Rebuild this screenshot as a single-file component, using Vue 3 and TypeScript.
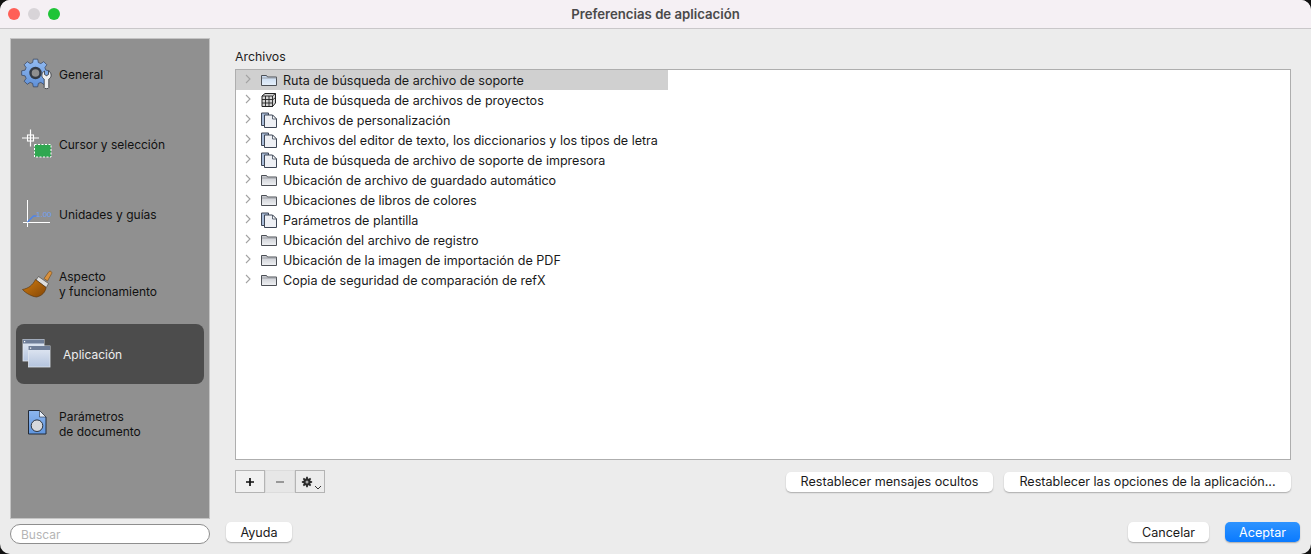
<script setup lang="ts">
type Kind = 'folderBlue' | 'grid' | 'docs' | 'folder'
interface Row { label: string; kind: Kind }
const rows: Row[] = [
  { label: 'Ruta de búsqueda de archivo de soporte', kind: 'folderBlue' },
  { label: 'Ruta de búsqueda de archivos de proyectos', kind: 'grid' },
  { label: 'Archivos de personalización', kind: 'docs' },
  { label: 'Archivos del editor de texto, los diccionarios y los tipos de letra', kind: 'docs' },
  { label: 'Ruta de búsqueda de archivo de soporte de impresora', kind: 'docs' },
  { label: 'Ubicación de archivo de guardado automático', kind: 'folder' },
  { label: 'Ubicaciones de libros de colores', kind: 'folder' },
  { label: 'Parámetros de plantilla', kind: 'docs' },
  { label: 'Ubicación del archivo de registro', kind: 'folder' },
  { label: 'Ubicación de la imagen de importación de PDF', kind: 'folder' },
  { label: 'Copia de seguridad de comparación de refX', kind: 'folder' },
]

function cog(cx: number, cy: number, outer: number, inner: number, teeth: number): string {
  const pts: string[] = []
  const step = (Math.PI * 2) / teeth
  for (let i = 0; i < teeth; i++) {
    const a = i * step - Math.PI / 2
    const offsets: [number, number][] = [
      [-0.34, inner],
      [-0.2, outer],
      [0.2, outer],
      [0.34, inner],
    ]
    for (const [o, r] of offsets) {
      const t = a + o * step
      pts.push(`${(cx + r * Math.cos(t)).toFixed(2)} ${(cy + r * Math.sin(t)).toFixed(2)}`)
    }
  }
  return 'M' + pts.join('L') + 'Z'
}
const bigCog = cog(14.5, 15, 14, 10.8, 8)
const smallCog = cog(8.5, 7.5, 5.2, 3.7, 8)
</script>

<template>
  <div class="window">
    <header class="titlebar">
      <div class="lights">
        <span class="light red"></span>
        <span class="light grey"></span>
        <span class="light green"></span>
      </div>
      <div class="title">Preferencias de aplicación</div>
    </header>

    <div class="body">
      <aside class="left">
        <nav class="side">
          <div class="item">
            <svg class="ico" width="32" height="32" viewBox="0 0 32 32">
              <defs>
                <linearGradient id="cogG" x1="0" y1="0" x2="0" y2="1">
                  <stop offset="0" stop-color="#94bcf2" />
                  <stop offset="1" stop-color="#5f90d8" />
                </linearGradient>
                <linearGradient id="brushG" x1="0" y1="0" x2="1" y2="1">
                  <stop offset="0" stop-color="#d07c10" />
                  <stop offset="1" stop-color="#844606" />
                </linearGradient>
                <linearGradient id="winG" x1="0" y1="0" x2="0" y2="1">
                  <stop offset="0" stop-color="#e4eaf4" />
                  <stop offset="1" stop-color="#b4c4de" />
                </linearGradient>
                <linearGradient id="docG" x1="0" y1="0" x2="0" y2="1">
                  <stop offset="0" stop-color="#8db6ee" />
                  <stop offset="1" stop-color="#5f95de" />
                </linearGradient>
                <linearGradient id="fldG" x1="0" y1="0" x2="0" y2="1">
                  <stop offset="0" stop-color="#c4c7ce" />
                  <stop offset="1" stop-color="#f0f1f3" />
                </linearGradient>
                <linearGradient id="fldB" x1="0" y1="0" x2="0" y2="1">
                  <stop offset="0" stop-color="#c5d8ef" />
                  <stop offset="1" stop-color="#e6f0fa" />
                </linearGradient>
              </defs>
              <path :d="bigCog" fill="url(#cogG)" stroke="#33415a" stroke-width=".7" />
              <circle cx="14.500" cy="15" r="5" fill="#8f8f8f" stroke="#343b46" stroke-width="2.400" />
              <path d="M23.500 13v3.500l2 1.200 2-1.200V13c1.500.8 2.600 2.200 2.600 4.200 0 1.800-1 3.200-2.300 3.900v8.500c0 1.400-4.600 1.400-4.600 0v-8.500c-1.300-.7-2.300-2.100-2.300-3.900 0-2 1.100-3.400 2.600-4.200z" fill="#eceef0" stroke="#30343a" stroke-width=".8" />
            </svg>
            <span class="lbl">General</span>
          </div>
          <div class="item">
            <svg class="ico" width="32" height="32" viewBox="0 0 32 32">
              <path d="M1 10h17M9.500 1.500v17" stroke="#fff" stroke-width="1.200" />
              <rect x="6.500" y="7" width="6" height="6" fill="none" stroke="#fff" stroke-width="1.100" />
              <rect x="13.500" y="16.500" width="16.500" height="12.500" fill="#2fa750" stroke="#fff" stroke-width="1" stroke-dasharray="2 1.500" />
            </svg>
            <span class="lbl">Cursor y selección</span>
          </div>
          <div class="item">
            <svg class="ico" width="32" height="32" viewBox="0 0 32 32">
              <path d="M6.500 2v27M2 24.500h27" stroke="#fff" stroke-width="1" />
              <path d="M6.500 24l6-6h3" stroke="#4d84ea" stroke-width="1.400" fill="none" />
              <text x="15" y="18.700" class="mini">1.00</text>
            </svg>
            <span class="lbl">Unidades y guías</span>
          </div>
          <div class="item">
            <svg class="ico" width="32" height="32" viewBox="0 0 32 32">
              <path d="M23 10.500l5-7c1-1.300 3.500.4 2.700 2L26.500 13z" fill="#d8913f" stroke="#6b4415" stroke-width=".6" />
              <path d="M17.500 8.500l10 7-2.200 4-10.300-7.500z" fill="#dedede" stroke="#3e3a36" stroke-width=".6" />
              <path d="M14.500 11.500l10.500 8c-.5 4.500-4 8.500-9.500 9.500-4.500-.5-10.500-3.500-14-7.500 5.500-1 10-4 13-10z" fill="url(#brushG)" stroke="#54300a" stroke-width=".6" />
            </svg>
            <span class="lbl">Aspecto<br />y funcionamiento</span>
          </div>
          <div class="item active">
            <svg class="ico" width="32" height="32" viewBox="0 0 32 32">
              <rect x="2" y="1.500" width="21" height="21.500" fill="url(#winG)" stroke="#e4e8ef" stroke-width=".8" />
              <rect x="2" y="1.500" width="21" height="4" fill="#6f7e98" />
              <rect x="3" y="3" width="1.200" height="1.200" fill="#fff" />
              <rect x="7.500" y="8" width="21.500" height="21" fill="url(#winG)" stroke="#dfe5ee" stroke-width=".8" />
              <rect x="7.500" y="8" width="21.500" height="4" fill="#6f7e98" />
              <rect x="9" y="9.500" width="1.200" height="1.200" fill="#fff" />
            </svg>
            <span class="lbl wide">Aplicación</span>
          </div>
          <div class="item">
            <svg class="ico" width="32" height="32" viewBox="0 0 32 32">
              <path d="M7.500 2.500h11l6.500 6.500v17H7.500z" fill="url(#docG)" stroke="#232a36" stroke-width="1" />
              <path d="M18.500 2.500V9H25z" fill="#e8eff9" stroke="#232a36" stroke-width=".6" />
              <circle cx="16" cy="17.700" r="5.800" fill="#d6d8dc" stroke="#2d3440" stroke-width="1" />
            </svg>
            <span class="lbl">Parámetros<br />de documento</span>
          </div>
        </nav>
        <div class="search">Buscar</div>
        <div class="foot-left"><button class="btn help">Ayuda</button></div>
      </aside>

      <main class="main">
        <div class="sec">Archivos</div>
        <div class="tree">
          <div v-for="(r, i) in rows" :key="r.label" class="row" :class="{ sel: i === 0 }">
            <svg class="chev" width="8" height="10" viewBox="0 0 8 10"><path d="M2 1l4 4-4 4" fill="none" stroke="#a3a3a3" stroke-width="1.100" /></svg>
            <svg class="ricon" width="18" height="16" viewBox="0 0 18 16">
              <template v-if="r.kind === 'folder' || r.kind === 'folderBlue'">
                <path d="M1.500 3.500h5l1 1.500h9v8.500h-15z" :fill="r.kind === 'folder' ? 'url(#fldG)' : 'url(#fldB)'" stroke="#4d5056" stroke-width="1" />
                <path d="M2 6h14.500" stroke="#8f9298" stroke-width=".8" />
              </template>
              <template v-else-if="r.kind === 'grid'">
                <path d="M2 4l3-2.500h10.500v9.500l-3 3.500H2z" fill="#d5d5d5" stroke="#222" stroke-width="1" />
                <path d="M2 4h10.500v11M2 7.500h10.500M2 11h10.500M5.500 4v11M9 4v11M12.500 4l3-2.500M12.500 8l3-2.500" fill="none" stroke="#222" stroke-width=".9" />
              </template>
              <template v-else>
                <path d="M1.500 1h7v12.500h-7z" fill="#a9bcd8" stroke="#3e4656" stroke-width="1" />
                <path d="M4.500 3h8l4 4v8.500h-12z" fill="#eef0f5" stroke="#3e4656" stroke-width="1" />
                <path d="M12.500 3v4h4z" fill="#fff" stroke="#3e4656" stroke-width=".8" />
              </template>
            </svg>
            <span class="rtext">{{ r.label }}</span>
          </div>
        </div>
        <div class="tools">
          <div class="seg">
            <span class="segbtn plus"><svg width="10" height="10" viewBox="0 0 10 10"><path d="M5 1v8M1 5h8" stroke="#111" stroke-width="1.700" /></svg></span>
            <span class="segbtn minus"><svg width="10" height="10" viewBox="0 0 10 10"><path d="M1 5h8" stroke="#8a8a8a" stroke-width="1.700" /></svg></span>
            <span class="segbtn gear">
              <svg width="26" height="16" viewBox="0 0 26 16">
                <path :d="smallCog" fill="#2a2a2a" transform="translate(1.500 .5)" />
                <circle cx="10" cy="8" r="1.500" fill="#a8a8a8" />
                <path d="M18 12l3 3 3-3" fill="none" stroke="#333" stroke-width="1" />
              </svg>
            </span>
          </div>
          <div class="tool-right">
            <button class="btn reset1">Restablecer mensajes ocultos</button>
            <button class="btn reset2">Restablecer las opciones de la aplicación...</button>
          </div>
        </div>
        <div class="foot">
          <button class="btn cancel">Cancelar</button>
          <button class="btn ok">Aceptar</button>
        </div>
      </main>
    </div>
  </div>
</template>

<style>
html, body { margin: 0; background: #111; }
</style>

<style scoped>
.window {
  width: 1311px;
  height: 554px;
  background: #ececec;
  border-radius: 10px;
  overflow: hidden;
  display: flex;
  flex-direction: column;
  font-family: Inter, "Liberation Sans", sans-serif;
  font-size: 12px;
  color: #1c1c1c;
}
.titlebar {
  height: 28px;
  box-sizing: content-box;
  flex: none;
  background: #f5f0f4;
  border-bottom: 1px solid #c9c7c9;
  display: flex;
  align-items: center;
  position: relative;
}
.lights { display: flex; gap: 8px; padding-left: 8px; }
.light { width: 12px; height: 12px; border-radius: 50%; }
.red { background: #ff5f57; }
.grey { background: #d8d4d8; }
.green { background: #1fc437; }
.title {
  position: absolute;
  left: 0;
  right: 0;
  text-align: center;
  font-weight: 600;
  font-size: 13.2px;
  color: #4a4a4a;
}
.body { flex: 1; display: flex; min-height: 0; }
.left {
  width: 200px;
  margin-left: 10px;
  padding-top: 9px;
  display: flex;
  flex-direction: column;
  position: relative;
}
.side {
  height: 481px;
  box-sizing: border-box;
  background: #909090;
  border: 1px solid #c4c4c4;
  padding: 5px;
  display: flex;
  flex-direction: column;
  gap: 10px;
}
.item {
  height: 60px;
  flex: none;
  display: flex;
  align-items: center;
  border-radius: 8px;
  padding-left: 5px;
  color: #111;
  line-height: 15px;
}
.ico { flex: none; margin-right: 6px; }
.active { background: #4c4c4c; color: #eee; }
.wide { margin-left: 4px; }
.search {
  margin-top: 5px;
  height: 20px;
  box-sizing: border-box;
  border: 1px solid #8e8e8e;
  border-radius: 10px;
  background: #fff;
  color: #b5b5b5;
  padding-left: 10px;
  line-height: 19px;
}
.foot-left { position: absolute; left: 216px; top: 493px; }
.main {
  flex: 1;
  min-width: 0;
  margin-left: 25px;
  margin-right: 20px;
  display: flex;
  flex-direction: column;
}
.sec { height: 40px; flex: none; padding-top: 20px; box-sizing: border-box; line-height: 15px; font-size: 12.3px; }
.tree {
  height: 391px;
  flex: none;
  box-sizing: border-box;
  background: #fff;
  border: 1px solid #aeaeae;
}
.row { height: 20px; width: 432px; display: flex; align-items: center; white-space: nowrap; }
.sel { background: #d0d0d0; }
.chev { flex: none; margin-left: 8px; margin-right: 8px; position: relative; top: -1px; }
.ricon { flex: none; margin-right: 5px; }
.rtext { font-size: 12.55px; color: #1a1a1a; }
.tools { display: flex; align-items: center; justify-content: space-between; margin-top: 10px; height: 23px; flex: none; }
.seg { display: flex; height: 23px; }
.segbtn {
  width: 30px;
  height: 23px;
  box-sizing: border-box;
  display: flex;
  align-items: center;
  justify-content: center;
  border: 1px solid #b4b4b4;
}
.plus { background: #f1f1f1; }
.minus { background: #e7e7e7; border-color: #dcdcdc; }
.gear { background: #ececec; }
.tool-right { display: flex; gap: 11px; }
.btn {
  height: 20px;
  padding: 0;
  border: none;
  border-radius: 5px;
  background: #fff;
  box-shadow: 0 1px 1.500px rgba(0, 0, 0, .28);
  font: inherit;
  font-size: 12.6px;
  color: #1a1a1a;
  text-align: center;
  display: block;
}
.reset1 { width: 207px; }
.reset2 { width: 287px; }
.help { width: 66px; }
.foot { display: flex; justify-content: flex-end; gap: 16px; margin-top: 29px; margin-right: -9px; }
.cancel { width: 81px; }
.ok { width: 75px; background: linear-gradient(#2d93ff, #0a7aff); color: #fff; }
.mini { font-family: "Liberation Sans", sans-serif; font-size: 8px; fill: #6fa0f5; }
</style>
